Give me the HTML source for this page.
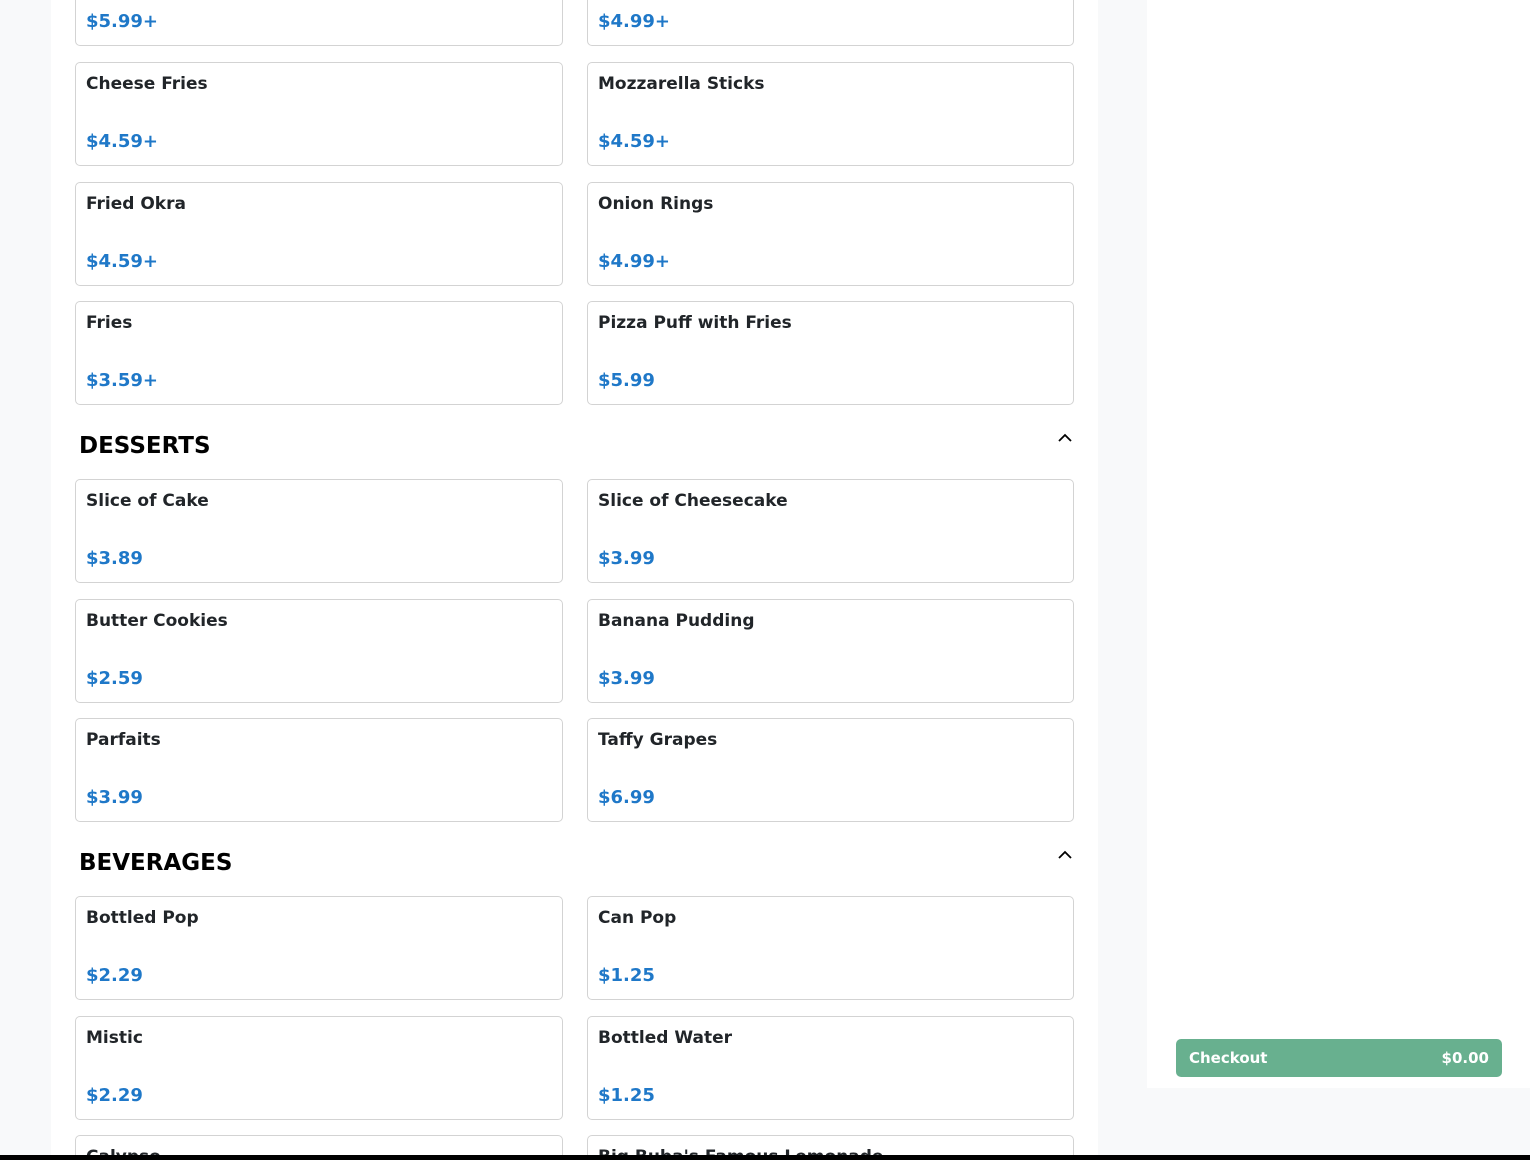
<!DOCTYPE html>
<html style="width:1530px;height:1160px;overflow:hidden"><head><meta charset="utf-8"><style>
*{margin:0;padding:0;box-sizing:border-box}
body{width:1530px;height:1160px;overflow:hidden;background:#f8f9fa;font-family:"DejaVu Sans","Liberation Sans",sans-serif;position:relative}
.main{position:absolute;left:51px;top:0;width:1047px;height:1160px;background:#fff}
.side{position:absolute;left:1147px;top:0;width:383px;height:1088px;background:#fff}
.card{position:absolute;width:488px;height:104px;border:1px solid #d3d3d3;border-radius:5px;background:#fff;overflow:hidden}
.r{width:487px}
.card .n{position:absolute;left:10px;top:11px;font-size:17px;font-weight:bold;color:#212529}
.r .n,.r .p{left:10px}
.card .p{position:absolute;left:10px;top:68px;font-size:18px;font-weight:bold;color:#1f78c8}
.h{position:absolute;left:79px;font-size:23px;font-weight:bold;color:#000}
.car{position:absolute;left:1058px;width:14px;height:10px}
.btn{position:absolute;left:1176px;top:1039px;width:326px;height:38px;background:#68b08f;border-radius:5px;color:#fff;font-size:15px;font-weight:bold}
.btn span{position:absolute;top:10px}
.bar{position:absolute;left:0;top:1155px;width:1530px;height:5px;background:#000}
</style></head><body>
<div class="main"></div>
<div class="side"></div>
<div class="card" style="left:75px;top:-58px"><div class="p">$5.99+</div></div>
<div class="card r" style="left:587px;top:-58px"><div class="p">$4.99+</div></div>
<div class="card" style="left:75px;top:62px"><div class="n">Cheese Fries</div><div class="p">$4.59+</div></div>
<div class="card r" style="left:587px;top:62px"><div class="n">Mozzarella Sticks</div><div class="p">$4.59+</div></div>
<div class="card" style="left:75px;top:182px"><div class="n">Fried Okra</div><div class="p">$4.59+</div></div>
<div class="card r" style="left:587px;top:182px"><div class="n">Onion Rings</div><div class="p">$4.99+</div></div>
<div class="card" style="left:75px;top:301px"><div class="n">Fries</div><div class="p">$3.59+</div></div>
<div class="card r" style="left:587px;top:301px"><div class="n">Pizza Puff with Fries</div><div class="p">$5.99</div></div>
<div class="h" style="top:433px">DESSERTS</div>
<svg class="car" style="top:433px" viewBox="0 0 14 10"><path d="M1 8 L7 2 L13 8" fill="none" stroke="#000" stroke-width="1.8"/></svg>
<div class="card" style="left:75px;top:479px"><div class="n">Slice of Cake</div><div class="p">$3.89</div></div>
<div class="card r" style="left:587px;top:479px"><div class="n">Slice of Cheesecake</div><div class="p">$3.99</div></div>
<div class="card" style="left:75px;top:599px"><div class="n">Butter Cookies</div><div class="p">$2.59</div></div>
<div class="card r" style="left:587px;top:599px"><div class="n">Banana Pudding</div><div class="p">$3.99</div></div>
<div class="card" style="left:75px;top:718px"><div class="n">Parfaits</div><div class="p">$3.99</div></div>
<div class="card r" style="left:587px;top:718px"><div class="n">Taffy Grapes</div><div class="p">$6.99</div></div>
<div class="h" style="top:850px">BEVERAGES</div>
<svg class="car" style="top:850px" viewBox="0 0 14 10"><path d="M1 8 L7 2 L13 8" fill="none" stroke="#000" stroke-width="1.8"/></svg>
<div class="card" style="left:75px;top:896px"><div class="n">Bottled Pop</div><div class="p">$2.29</div></div>
<div class="card r" style="left:587px;top:896px"><div class="n">Can Pop</div><div class="p">$1.25</div></div>
<div class="card" style="left:75px;top:1016px"><div class="n">Mistic</div><div class="p">$2.29</div></div>
<div class="card r" style="left:587px;top:1016px"><div class="n">Bottled Water</div><div class="p">$1.25</div></div>
<div class="card" style="left:75px;top:1135px;height:25px"><div class="n">Calypso</div></div>
<div class="card r" style="left:587px;top:1135px;height:25px"><div class="n">Big Buba's Famous Lemonade</div></div>
<div class="btn"><span style="left:13px">Checkout</span><span style="right:13px">$0.00</span></div>
<div class="bar"></div>
</body></html>
